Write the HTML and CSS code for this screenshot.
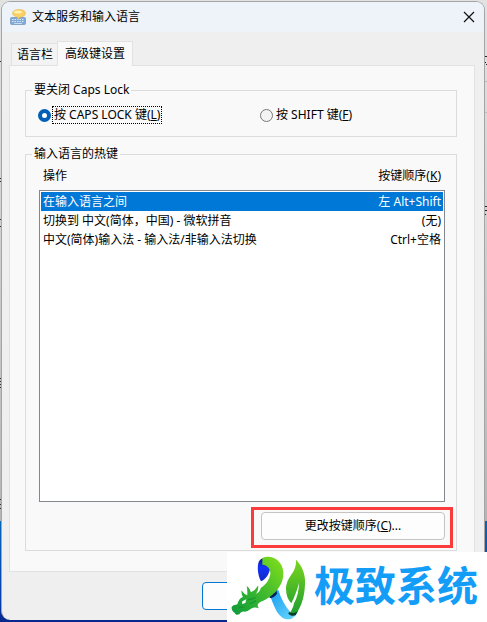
FILE: index.html
```
<!DOCTYPE html>
<html lang="zh-CN">
<head>
  <meta charset="UTF-8">
  <title>文本服务和输入语言</title>
  <meta name="viewport" content="width=device-width, initial-scale=1.0">
  <link rel="stylesheet" href="styles.css">
</head>
<body>
  <!-- slivers of the page behind the dialog -->
  <svg class="behind behind-left" width="2" height="622" viewBox="0 0 2 622" aria-hidden="true">
    <path d="M0 61.5h2M0 178.5h1M0 181.5h2M0 219.5h2M0 226.5h2M0 378.5h2M0 381.5h2M0 384.5h2M0 387.5h2M0 499.5h2M0 504.5h2M0 508.5h2" stroke="#333"/>
  </svg>
  <svg class="behind behind-right" width="2" height="622" viewBox="0 0 2 622" aria-hidden="true">
    <path d="M0 56.5h2M0 62.5h1M1 64.5h1M0 206.5h2M0 210.5h2M0 214.5h1" stroke="#222"/>
    <path d="M0 81.5h2M0 112.5h2" stroke="#bbb"/>
  </svg>

  <main class="dialog">
    <header class="titlebar">
      <svg class="app-icon" width="16" height="16" viewBox="0 0 16 16" aria-hidden="true">
        <rect x="0.5" y="8.5" width="15" height="7" rx="1" fill="#7fa9d8" stroke="#86a4c6"/>
        <path d="M2 10.5h12M2 12.5h12" stroke="#d9ebfa" stroke-dasharray="1.5 1"/>
        <path d="M4 14.5h8" stroke="#c5dcf2"/>
        <path d="M9 0.5c4 0 6.5 1.5 6.5 3.8S13 8 10 8.2L7.5 10.5 7.8 8C5 7.7 2.500 6.500 2.500 4.300S5 .5 9 .5z" fill="#f8cf62" stroke="#e6bd62" stroke-width=".6"/>
        <ellipse cx="8" cy="3" rx="4" ry="1.6" fill="#fff0ae"/>
      </svg>
      <h1>文本服务和输入语言</h1>
      <button class="close" type="button" aria-label="关闭">
        <svg width="12" height="12" viewBox="0 0 12 12"><path d="M1 1l10 10M11 1L1 11" stroke="#111" stroke-width="1.2"/></svg>
      </button>
    </header>

    <div class="tabs" role="tablist">
      <button class="tab" type="button" role="tab">语言栏</button>
      <button class="tab active" type="button" role="tab" aria-selected="true">高级键设置</button>
    </div>

    <section class="panel">
      <fieldset>
        <legend>要关闭 Caps Lock</legend>
        <div class="radios">
          <label><input type="radio" name="caps" checked><span class="focused">按 CAPS LOCK 键(<u>L</u>)</span></label>
          <label><input type="radio" name="caps"><span>按 SHIFT 键(<u>F</u>)</span></label>
        </div>
      </fieldset>

      <fieldset>
        <legend>输入语言的热键</legend>
        <table class="hotkeys">
          <thead>
            <tr><th>操作</th><th>按键顺序(<u>K</u>)</th></tr>
          </thead>
          <tbody>
            <tr class="selected"><td>在输入语言之间</td><td>左 Alt+Shift</td></tr>
            <tr><td>切换到 中文(简体，中国) - 微软拼音</td><td>(无)</td></tr>
            <tr><td>中文(简体)输入法 - 输入法/非输入法切换</td><td>Ctrl+空格</td></tr>
          </tbody>
        </table>
        <div class="highlight">
          <button class="change" type="button">更改按键顺序(<u>C</u>)...</button>
        </div>
      </fieldset>
    </section>

    <footer class="actions">
      <button class="ok" type="button" aria-label="确定"></button>
    </footer>
  </main>

  <div class="brand">
    <svg width="84" height="68" viewBox="6 6 252 204" aria-hidden="true">
      <defs>
        <linearGradient id="dragon" x1="0" y1="1" x2="1" y2="0">
          <stop offset="0" stop-color="#0c9a3a"/>
          <stop offset=".5" stop-color="#3fba2e"/>
          <stop offset="1" stop-color="#86e01a"/>
        </linearGradient>
        <linearGradient id="leaf" x1="0" y1="0" x2="0" y2="1">
          <stop offset="0" stop-color="#7ad61c"/>
          <stop offset="1" stop-color="#1f9e30"/>
        </linearGradient>
        <linearGradient id="tail" x1="0" y1="0" x2="1" y2="1">
          <stop offset="0" stop-color="#159bed"/>
          <stop offset="1" stop-color="#6ad8ff"/>
        </linearGradient>
        <linearGradient id="loop" x1="0" y1="0" x2="0" y2="1">
          <stop offset="0" stop-color="#0a1796"/>
          <stop offset=".4" stop-color="#1433f5"/>
          <stop offset="1" stop-color="#1028c8"/>
        </linearGradient>
      </defs>
      <path d="M132 128l28-8c8 26 20 48 36 66l20 2c-6 12-14 20-26 20-16 0-28-12-36-26-8-16-16-36-22-54z" fill="url(#tail)"/>
      <path d="M130 134l30-26-6 18 3 4c-7 10-14 14-22 15z" fill="#08215e"/>
      <path d="M108 94C98 76 96 50 101 36c5-12 20-16 30-8 8 12 6 32-2 46-6 10-12 16-21 20z" fill="url(#loop)"/>
      <path d="M112 24C138 12 172 30 175 66c2 32-18 58-42 76-14 10-24 11-32 18-5 5-3 10 1 15-10-4-18-3-25 2-6 5-12 8-20 8-6-1-10 2-14 8-7 3-12 1-14-5-6-2-10-9-9-17 4-6 11-6 17-8 3-13 10-20 17-22-4-6-5-12-4-20 4 8 10 13 17 15 0-10 0-21-2-28 7 5 11 11 12 18 10-3 17-10 22-20 2 8 0 17-6 25 7-2 12-9 15-18 15-8 25-24 28-40 1-16-8-28-24-29z" fill="url(#dragon)"/>
      <path d="M68 148c10 2 17-1 23-6M75 160c8 0 13-4 17-9M57 170c-5 3-11 3-16 0" fill="none" stroke="#1a962f" stroke-width="4"/>
      <path d="M52 154l12-6-3 11-10 3z" fill="#fff"/>
      <path d="M213 29c19 20 29 44 27 73-1 37-11 66-24 86l-24 4c8-10 13-20 15-32 9-17 15-38 15-62-6 24-14 44-23 62-10-10-16-25-16-42 0-22 10-36 20-50 7-11 11-24 10-39z" fill="url(#leaf)"/>
      <path d="M192 186c8 5 18 4 27-3l-7 13c-9 3-18 0-22-5z" fill="#0a3d28"/>
    </svg>
    <span class="brand-name">极致系统</span>
  </div>
</body>
</html>
```

FILE: styles.css
```
* { box-sizing: border-box; }
body {
  margin: 0;
  padding: 1px 2px 2px 1px;
  position: relative;
  overflow-x: hidden;
  font: 12px/16px "Noto Sans", "Noto Sans CJK SC", sans-serif;
  color: #000;
  background: linear-gradient(#e2e2e2, #d5d5d5 180px, #b5b5b5 521px, #0865b8 521px, #063fb0 600px, #08278c 622px);
}
button { font: inherit; color: inherit; padding: 0; }

.behind { position: absolute; top: 0; }
.behind-left { left: 0; }
.behind-right { right: 0; }

.dialog {
  position: relative;
  background: #efefef;
  border: 1px solid #a5a5a5;
  border-bottom: 0;
  border-radius: 9px;
  overflow: hidden;
}

.titlebar { display: flex; align-items: center; height: 30px; padding: 0 9px 0 8px; background: #edf3f8; }
.titlebar h1 { flex: 1; margin: 0 0 0 6px; font-size: 12px; font-weight: normal; line-height: 16px; }
.close { display: flex; border: 0; background: none; }

.tabs { display: flex; align-items: flex-end; padding: 9px 9px 0; }
.tab { height: 22px; padding: 0 4px 0 5px; background: #f3f3f3; border: 1px solid #e2e2e2; border-width: 1px 0 0 1px; }
.tab.active {
  position: relative;
  height: 25px;
  margin-bottom: -1px;
  padding: 0 7px;
  background: #f9f9f9;
  border-width: 1px 1px 0;
}

.panel { margin: 0 9px 0 7px; padding: 16px 17px 20px 15px; background: #f9f9f9; border: 1px solid #e2e2e2; }
fieldset { margin: 0; padding: 0 6px; border: 1px solid #dcdcdc; min-width: 0; }
fieldset + fieldset { margin-top: 9px; padding-bottom: 2px; }
legend { padding: 0 2px; }

.radios { display: flex; padding: 7px 6px 11px; }
.radios label { display: flex; align-items: center; flex: 1; gap: 2px; height: 20px; }
.radios label:first-child { flex: 0 1 222px; }
.radios span { padding: 0 1px; white-space: nowrap; }
.radios .focused { outline: 1px dotted #000; }
.radios input {
  appearance: none;
  flex: none;
  width: 13px;
  height: 13px;
  margin: 0;
  border: 1px solid #777;
  border-radius: 50%;
  background: #f3f3f3;
}
.radios input:checked { border: 4px solid #005fb8; background: #fff; }

.hotkeys { display: block; margin: 6px 5px 0 7px; }
.hotkeys thead, .hotkeys tbody { display: block; }
.hotkeys tr { display: flex; justify-content: space-between; align-items: center; height: 19px; padding: 0 2px; }
.hotkeys thead tr { height: 16px; padding: 0 4px; margin-bottom: 6px; }
.hotkeys th, .hotkeys td { padding: 0; font-weight: normal; }
.hotkeys tbody { min-height: 312px; padding: 1px; background: #fff; border: 1px solid #828790; }
.hotkeys .selected { background: #0078d7; color: #fff; }

.highlight { width: 202px; margin: 5px -3px 0 auto; padding: 2px 5px 5px 7px; border: 3px solid #fb3a3c; }
.change { display: block; width: 100%; height: 28px; background: #fdfdfd; border: 1px solid #c4c4c4; border-radius: 4px; }

.actions { display: flex; padding: 10px 200px; }
.ok { width: 83px; height: 28px; background: #fdfdfd; border: 1px solid #0078d4; border-radius: 4px; }

/* site badge over the bottom right corner */
.brand {
  position: absolute;
  right: 0;
  bottom: 0;
  display: flex;
  align-items: flex-start;
  gap: 3px;
  width: 260px;
  height: 70px;
  background: #fff;
}
.brand-name {
  font: bold 41px/62px "Noto Sans CJK SC", sans-serif;
  color: #139df7;
  white-space: nowrap;
}
```
